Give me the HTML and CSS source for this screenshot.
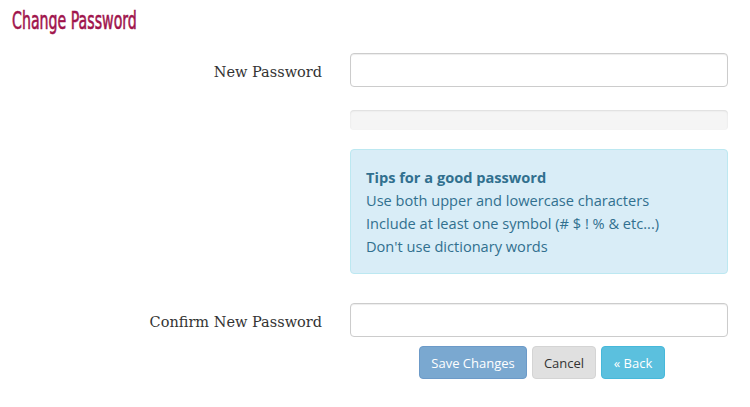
FILE: index.html
```html
<!DOCTYPE html>
<html>
<head>
<meta charset="utf-8">
<link rel="stylesheet" href="styles.css">
</head>
<body>
<div class="page">
  <h1 class="title"><span class="title-text">Change Password</span></h1>
  <div class="form">
    <label class="label row-1">New Password</label>
    <div class="field row-1"><input class="input" type="password"></div>

    <div class="field row-2"><div class="meter"></div></div>

    <div class="field row-3">
      <div class="alert">
        <div class="alert-title">Tips for a good password</div>
        <div>Use both upper and lowercase characters</div>
        <div>Include at least one symbol (# $ ! % &amp; etc...)</div>
        <div>Don't use dictionary words</div>
      </div>
    </div>

    <label class="label row-4">Confirm New Password</label>
    <div class="field row-4"><input class="input" type="password"></div>

    <div class="field row-5">
      <div class="buttons">
        <button class="btn btn-save">Save Changes</button>
        <button class="btn btn-cancel">Cancel</button>
        <button class="btn btn-back">« Back</button>
      </div>
    </div>
  </div>
</div>
</body>
</html>
```
FILE: styles.css
```css
html, body { margin: 0; padding: 0; background: #fff; }
.page { width: 750px; }
.title {
  margin: 0;
  padding: 7px 0 0 12px;
  height: 45px;
  box-sizing: border-box;
  font-family: "DejaVu Sans Condensed", "DejaVu Sans", sans-serif;
  font-weight: normal;
  font-size: 25px;
  line-height: 28px;
  color: #a0134c;
}
.title-text {
  display: inline-block;
  transform: scaleX(0.63);
  transform-origin: left center;
  -webkit-text-stroke: 0.6px #a0134c;
}
.form {
  display: grid;
  grid-template-columns: 322px 378px;
  column-gap: 28px;
  align-items: center;
}
.label {
  grid-column: 1;
  text-align: right;
  font-family: "DejaVu Serif", serif;
  font-size: 14.5px;
  padding-top: 4px;
  color: #333;
}
.field { grid-column: 2; }
.row-1 { grid-row: 1; margin-top: 8px; }
.row-2 { grid-row: 2; margin-top: 23px; }
.row-3 { grid-row: 3; margin-top: 19px; }
.row-4 { grid-row: 4; margin-top: 29px; }
.row-5 { grid-row: 5; margin-top: 9px; }
.input {
  display: block;
  width: 100%;
  height: 34px;
  box-sizing: border-box;
  border: 1px solid #ccc;
  border-radius: 4px;
  box-shadow: inset 0 1px 1px rgba(0,0,0,.075);
  margin: 0;
  padding: 6px 12px;
  background: #fff;
}
.meter {
  height: 20px;
  background: #f5f5f5;
  border-radius: 4px;
  box-shadow: inset 0 1px 2px rgba(0,0,0,.1);
}
.alert {
  box-sizing: border-box;
  height: 125px;
  padding: 16px 15px;
  background: #d9edf7;
  border: 1px solid #bce8f1;
  border-radius: 4px;
  color: #31708f;
  font-family: "Open Sans", sans-serif;
  font-size: 14.6px;
  line-height: 23px;
}
.alert-title { font-weight: bold; }
.buttons {
  display: flex;
  gap: 5px;
  margin-left: 69px;
}
.btn {
  height: 33px;
  box-sizing: border-box;
  border: 1px solid transparent;
  border-radius: 4px;
  font-family: "Open Sans", sans-serif;
  font-size: 13px;
  padding: 0;
  margin: 0;
  white-space: nowrap;
  text-align: center;
}
.btn-save { width: 108px; background: #7aa8d0; border-color: #6c9ac8; color: #fff; }
.btn-cancel { width: 64px; background: #e0e0e0; border-color: #d4d4d4; color: #333; }
.btn-back { width: 64px; background: #5bc0de; border-color: #46b8da; color: #fff; }
```
